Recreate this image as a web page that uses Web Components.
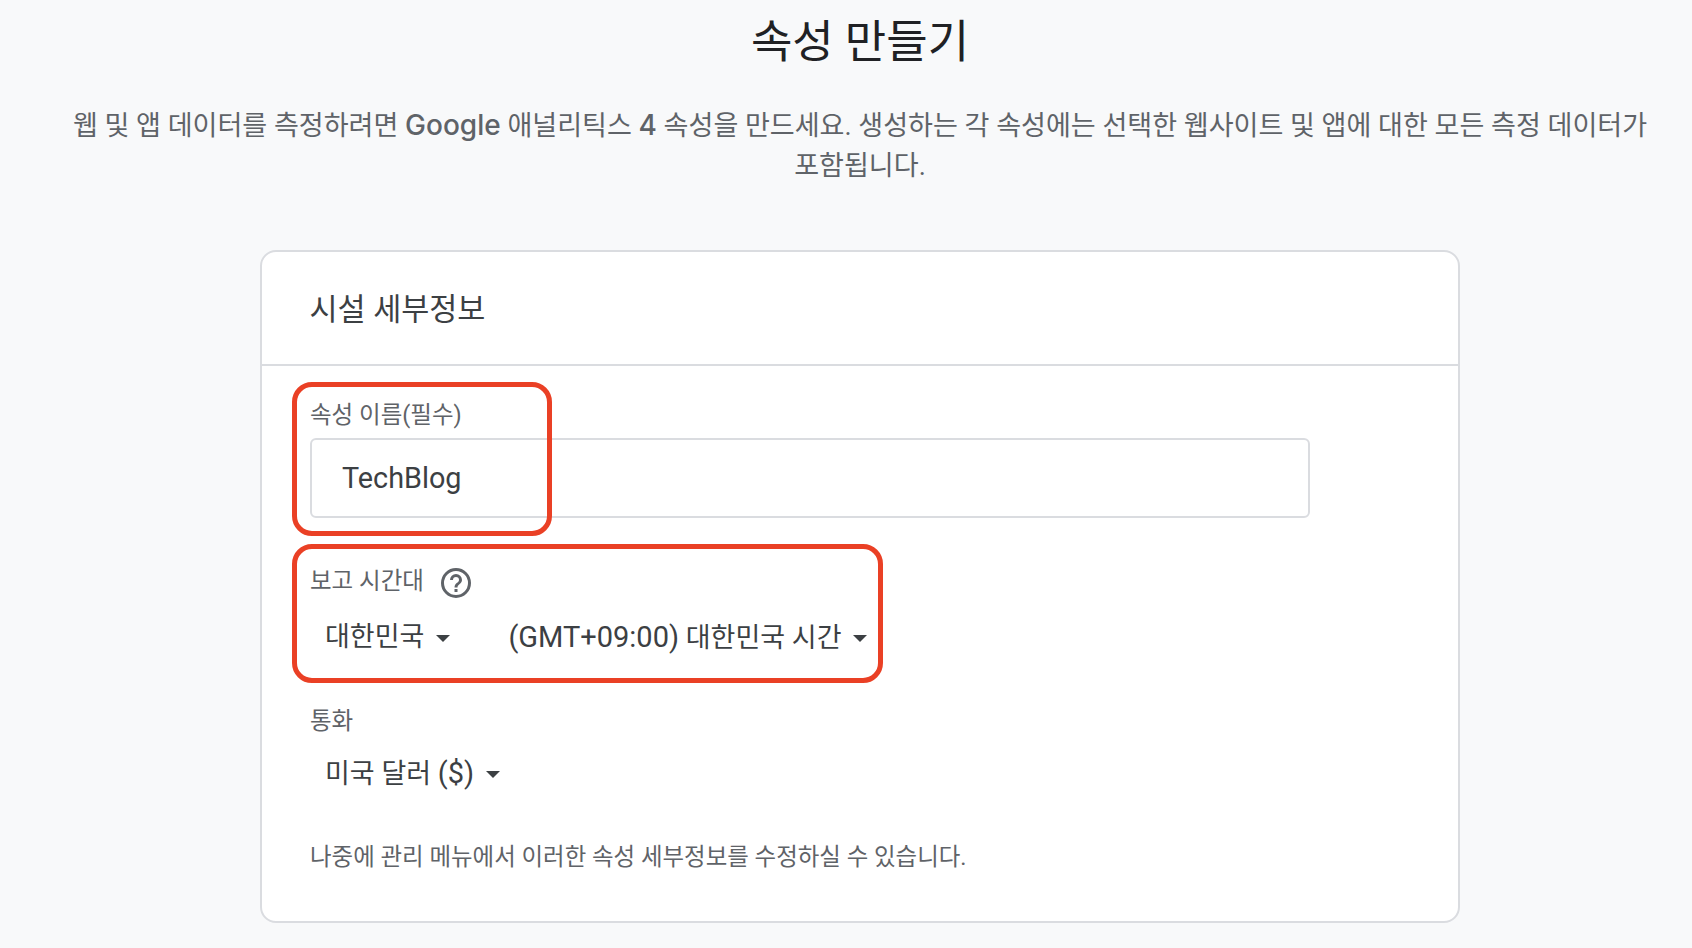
<!DOCTYPE html>
<html lang="ko">
<head>
<meta charset="utf-8">
<title>속성 만들기</title>
<style>
html,body{margin:0;padding:0;background:#f8f9fa;height:948px;overflow:hidden}
body{font-family:Roboto,"Noto Sans CJK KR",sans-serif;color:#202124}
</style>
</head>
<body>
<ga-page>
  <ga-header slot="header" heading="속성 만들기">웹 및 앱 데이터를 측정하려면 <ga-brand>Google</ga-brand> 애널리틱스 <ga-brand>4</ga-brand> 속성을 만드세요. 생성하는 각 속성에는 선택한 웹사이트 및 앱에 대한 모든 측정 데이터가 포함됩니다.</ga-header>
  <ga-card heading="시설 세부정보">
    <ga-text-field label="속성 이름(필수)" value="TechBlog"></ga-text-field>
    <ga-select-row label="보고 시간대" help style="--label-top:47px">
      <ga-select>대한민국</ga-select>
      <ga-select style="margin-left:58px"><ga-latin>(GMT+09:00)</ga-latin> 대한민국 시간</ga-select>
    </ga-select-row>
    <ga-select-row label="통화" style="--label-top:45.5px;--sel-gap:15px">
      <ga-select>미국 달러 <ga-latin>($)</ga-latin></ga-select>
    </ga-select-row>
    <ga-note>나중에 관리 메뉴에서 이러한 속성 세부정보를 수정하실 수 있습니다.</ga-note>
    <ga-highlight style="left:30px;top:16px;width:260px;height:154px"></ga-highlight>
    <ga-highlight style="left:30px;top:178px;width:591px;height:139px"></ga-highlight>
  </ga-card>
</ga-page>
<script>
function def(name, css, html){
  customElements.define(name, class extends HTMLElement{
    connectedCallback(){
      if(this.shadowRoot) return;
      const r=this.attachShadow({mode:'open'});
      r.innerHTML='<style>'+css+'</style>'+(typeof html==='function'?html(this):html);
    }
  });
}
const FONT='Roboto,"Noto Sans CJK KR",sans-serif';
def('ga-page',`:host{display:flex;flex-direction:column;align-items:center;box-sizing:border-box;width:1692px;padding-left:28px}`,`<slot name="header"></slot><slot></slot>`);
def('ga-header',`:host{display:block;width:1600px;height:166px;text-align:center}
h1{margin:0;padding-top:14.5px;font:400 45px/56px ${FONT};color:#202124}
p{margin:35px 0 0;font:400 27.05px/40px ${FONT};color:#5f6368;word-break:keep-all}`,
 h=>`<h1>${h.getAttribute('heading')}</h1><p><slot></slot></p>`);
def('ga-brand',`:host{display:inline;font-family:Inter,"Noto Sans CJK KR",sans-serif;font-weight:500;font-size:28px;line-height:1}`,`<slot></slot>`);
def('ga-latin',`:host{display:inline;font-size:29px}`,`<slot></slot>`);
def('ga-card',`:host{display:block;box-sizing:border-box;width:1200px;height:673px;margin-top:84px;background:#fff;border:2px solid #dadce0;border-radius:16px}
header{box-sizing:border-box;height:114px;border-bottom:2px solid #dadce0;padding:4px 47px 0 47.5px;display:flex;align-items:center;font:400 30.5px/40px ${FONT};color:#3c4043}
.body{position:relative;padding:0 48px}`,
 h=>`<header>${h.getAttribute('heading')}</header><div class="body"><slot></slot></div>`);
def('ga-text-field',`:host{display:block;padding-top:33px}
label{display:block;font:400 23.5px/32px ${FONT};color:#5f6368}
.box{box-sizing:border-box;width:1000px;height:80px;margin-top:7px;border:2px solid #dadce0;border-radius:6px;padding:0 30px;display:flex;align-items:center;font:400 28.8px/36px ${FONT};color:#3c4043}`,
 h=>`<label>${h.getAttribute('label')}</label><div class="box">${h.getAttribute('value')}</div>`);
def('ga-select-row',`:host{display:block;padding-top:var(--label-top,30px)}
.l{display:flex;align-items:center;height:32px;font:400 23.5px/32px ${FONT};color:#5f6368}
.r{display:flex;align-items:center;height:44px;margin-top:var(--sel-gap,18px);padding-left:15px}
svg{flex:none;width:36px;height:36px;margin-left:14px;margin-top:4px}`,
 h=>`<div class="l">${h.getAttribute('label')}${h.hasAttribute('help')?`<svg viewBox="0 0 24 24" fill="#5f6368"><path d="M12 2a10 10 0 1 0 0 20 10 10 0 0 0 0-20zm0 18a8 8 0 1 1 0-16 8 8 0 0 1 0 16z"/><path d="M11 16h2v2h-2zM12 6a4 4 0 0 0-4 4h2a2 2 0 0 1 4 0c0 2-3 1.75-3 5h2c0-2.25 3-2.5 3-5a4 4 0 0 0-4-4z"/></svg>`:''}</div><div class="r"><slot></slot></div>`);
def('ga-select',`:host{display:inline-flex;align-items:center;font:400 27px/36px ${FONT};color:#3c4043;white-space:nowrap}
span{white-space:pre}
i{display:block;flex:none;width:0;height:0;margin-left:12px;margin-top:2px;border:7px solid transparent;border-top-color:#3c4043;border-bottom:0}`,`<span><slot></slot></span><i></i>`);
def('ga-note',`:host{display:block;margin-top:45.5px;font:400 23.45px/32px ${FONT};color:#5f6368}`,`<slot></slot>`);
def('ga-highlight',`:host{display:block;position:absolute;box-sizing:border-box;border:5px solid #ea4025;border-radius:20px;pointer-events:none}`,``);
</script>
</body>
</html>
